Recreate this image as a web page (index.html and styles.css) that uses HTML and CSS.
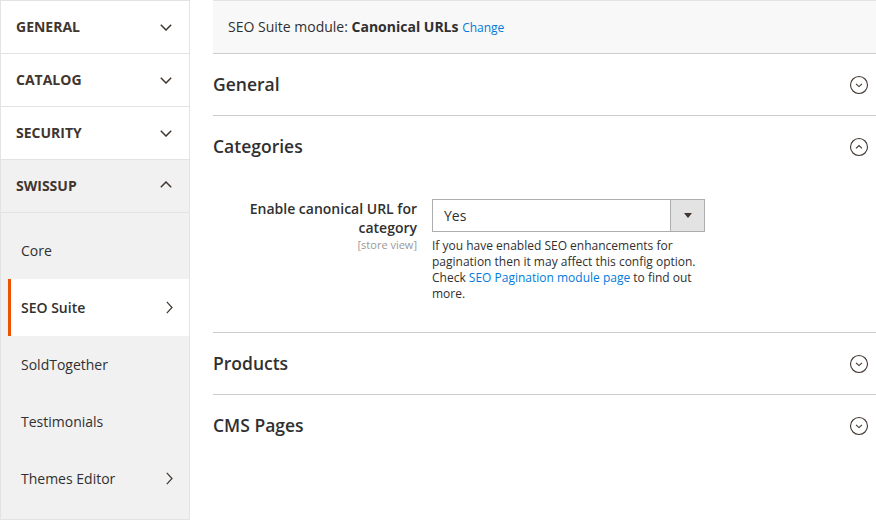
FILE: index.html
```html
<!DOCTYPE html>
<html>
<head>
<meta charset="utf-8">
<link rel="stylesheet" href="styles.css">
</head>
<body>
<div class="page">
  <nav class="nav">
    <div class="nav-title"><span>General</span>
      <svg class="chev" width="12" height="7" viewBox="0 0 12 7"><path d="M0.8 0.8 L6 6 L11.2 0.8" fill="none" stroke="#41362f" stroke-width="1.5"/></svg>
    </div>
    <div class="nav-title"><span>Catalog</span>
      <svg class="chev" width="12" height="7" viewBox="0 0 12 7"><path d="M0.8 0.8 L6 6 L11.2 0.8" fill="none" stroke="#41362f" stroke-width="1.5"/></svg>
    </div>
    <div class="nav-title"><span>Security</span>
      <svg class="chev" width="12" height="7" viewBox="0 0 12 7"><path d="M0.8 0.8 L6 6 L11.2 0.8" fill="none" stroke="#41362f" stroke-width="1.5"/></svg>
    </div>
    <div class="nav-title open"><span>Swissup</span>
      <svg class="chev" width="12" height="7" viewBox="0 0 12 7"><path d="M0.8 6.2 L6 1 L11.2 6.2" fill="none" stroke="#41362f" stroke-width="1.5"/></svg>
    </div>
    <ul class="nav-items">
      <li class="nav-item"><span>Core</span></li>
      <li class="nav-item active"><span>SEO Suite</span>
        <svg class="chev-r" width="7" height="13" viewBox="0 0 7 13"><path d="M0.8 0.8 L6 6.5 L0.8 12.2" fill="none" stroke="#41362f" stroke-width="1.2"/></svg>
      </li>
      <li class="nav-item"><span>SoldTogether</span></li>
      <li class="nav-item"><span>Testimonials</span></li>
      <li class="nav-item"><span>Themes Editor</span>
        <svg class="chev-r" width="7" height="13" viewBox="0 0 7 13"><path d="M0.8 0.8 L6 6.5 L0.8 12.2" fill="none" stroke="#41362f" stroke-width="1.2"/></svg>
      </li>
    </ul>
  </nav>
  <main class="main">
    <div class="module-bar">SEO Suite module: <strong>Canonical URLs</strong> <a class="change" href="#">Change</a></div>

    <section class="block">
      <div class="block-title"><span>General</span>
        <svg class="circ" width="20" height="20" viewBox="0 0 20 20"><circle cx="10" cy="10" r="8.5" fill="none" stroke="#41362f" stroke-width="1.1"/><path d="M7 8.8 L10 11.6 L13 8.8" fill="none" stroke="#41362f" stroke-width="1.1"/></svg>
      </div>
    </section>

    <section class="block">
      <div class="block-title"><span>Categories</span>
        <svg class="circ" width="20" height="20" viewBox="0 0 20 20"><circle cx="10" cy="10" r="8.5" fill="none" stroke="#41362f" stroke-width="1.1"/><path d="M7 11.4 L10 8.6 L13 11.4" fill="none" stroke="#41362f" stroke-width="1.1"/></svg>
      </div>
      <div class="block-body">
        <div class="field">
          <div class="field-label">
            <div class="label-text">Enable canonical URL for category</div>
            <div class="scope">[store view]</div>
          </div>
          <div class="field-control">
            <div class="select">
              <span class="select-value">Yes</span>
              <span class="select-btn"><svg width="8" height="5" viewBox="0 0 8 5"><path d="M0 0 H8 L4 5 Z" fill="#41362f"/></svg></span>
            </div>
            <p class="note">If you have enabled SEO enhancements for pagination then it may affect this config option. Check <a href="#">SEO Pagination module page</a> to find out more.</p>
          </div>
        </div>
      </div>
    </section>

    <section class="block">
      <div class="block-title"><span>Products</span>
        <svg class="circ" width="20" height="20" viewBox="0 0 20 20"><circle cx="10" cy="10" r="8.5" fill="none" stroke="#41362f" stroke-width="1.1"/><path d="M7 8.8 L10 11.6 L13 8.8" fill="none" stroke="#41362f" stroke-width="1.1"/></svg>
      </div>
    </section>

    <section class="block last">
      <div class="block-title"><span>CMS Pages</span>
        <svg class="circ" width="20" height="20" viewBox="0 0 20 20"><circle cx="10" cy="10" r="8.5" fill="none" stroke="#41362f" stroke-width="1.1"/><path d="M7 8.8 L10 11.6 L13 8.8" fill="none" stroke="#41362f" stroke-width="1.1"/></svg>
      </div>
    </section>
  </main>
</div>
</body>
</html>
```

FILE: styles.css
```css
* { box-sizing: border-box; }
html, body { margin: 0; padding: 0; background: #fff; }
body {
  font-family: "Open Sans", "Liberation Sans", sans-serif;
  color: #303030;
  font-size: 14px;
}
.page {
  display: flex;
  align-items: flex-start;
  width: 876px;
  height: 521px;
  overflow: hidden;
}
.nav {
  width: 190px;
  flex: none;
  border: 1px solid #e3e3e3;
}
.nav-title {
  height: 53px;
  border-bottom: 1px solid #e3e3e3;
  display: flex;
  align-items: center;
  justify-content: space-between;
  padding: 0 17px 2px 15px;
  font-weight: 700;
  text-transform: uppercase;
  color: #41362f;
  font-size: 14px;
}
.nav-title .chev { margin-top: 2px; }
.nav-title.open { background: #f1f1f1; }
.nav-title.open .chev { margin-top: -1px; }
.nav-items {
  list-style: none;
  margin: 0;
  padding: 9px 0 12px;
  background: #f1f1f1;
}
.nav-item {
  height: 57px;
  margin-left: 7px;
  border-left: 3px solid transparent;
  padding: 0 16px 0 10px;
  display: flex;
  align-items: center;
  justify-content: space-between;
  color: #303030;
}
.nav-item.active {
  background: #fff;
  border-left-color: #eb5202;
  font-weight: 600;
}
.main {
  flex: 1;
  margin-left: 23px;
}
.module-bar {
  height: 54px;
  background: #f8f8f8;
  border-top: 1px solid #e3e3e3;
  border-bottom: 1px solid #cccccc;
  padding: 16px 0 0 15px;
  font-size: 14px;
  color: #303030;
}
.module-bar strong { font-weight: 700; }
.change {
  color: #007bdb;
  text-decoration: none;
  font-size: 12px;
}
.block { border-bottom: 1px solid #cccccc; }
.block.last { border-bottom: none; }
.block-title {
  height: 61px;
  display: flex;
  align-items: center;
  justify-content: space-between;
  padding: 0 7px 1px 0;
  font-size: 17.5px;
  font-weight: 600;
  color: #303030;
}
.block-title .circ { margin-top: 1px; }
.block-body {
  padding: 22px 0 30px;
}
.field {
  display: flex;
  align-items: flex-start;
}
.field-label {
  width: 204px;
  flex: none;
  text-align: right;
}
.label-text {
  font-weight: 600;
  font-size: 14px;
  line-height: 19px;
  padding-left: 30px;
}
.scope {
  font-size: 11px;
  color: #999;
  line-height: 13px;
  margin-top: 1px;
}
.field-control {
  margin-left: 15px;
  width: 273px;
}
.select {
  height: 33px;
  border: 1px solid #adadad;
  display: flex;
  align-items: center;
  justify-content: space-between;
  background: #fff;
}
.select-value {
  padding-left: 11px;
  font-size: 14px;
}
.select-btn {
  width: 34px;
  height: 100%;
  background: #e3e3e3;
  border-left: 1px solid #adadad;
  display: flex;
  align-items: center;
  justify-content: center;
}
.note {
  margin: 6px 0 0;
  font-size: 12px;
  line-height: 16px;
  color: #303030;
}
.note a { color: #007bdb; text-decoration: none; }
```
